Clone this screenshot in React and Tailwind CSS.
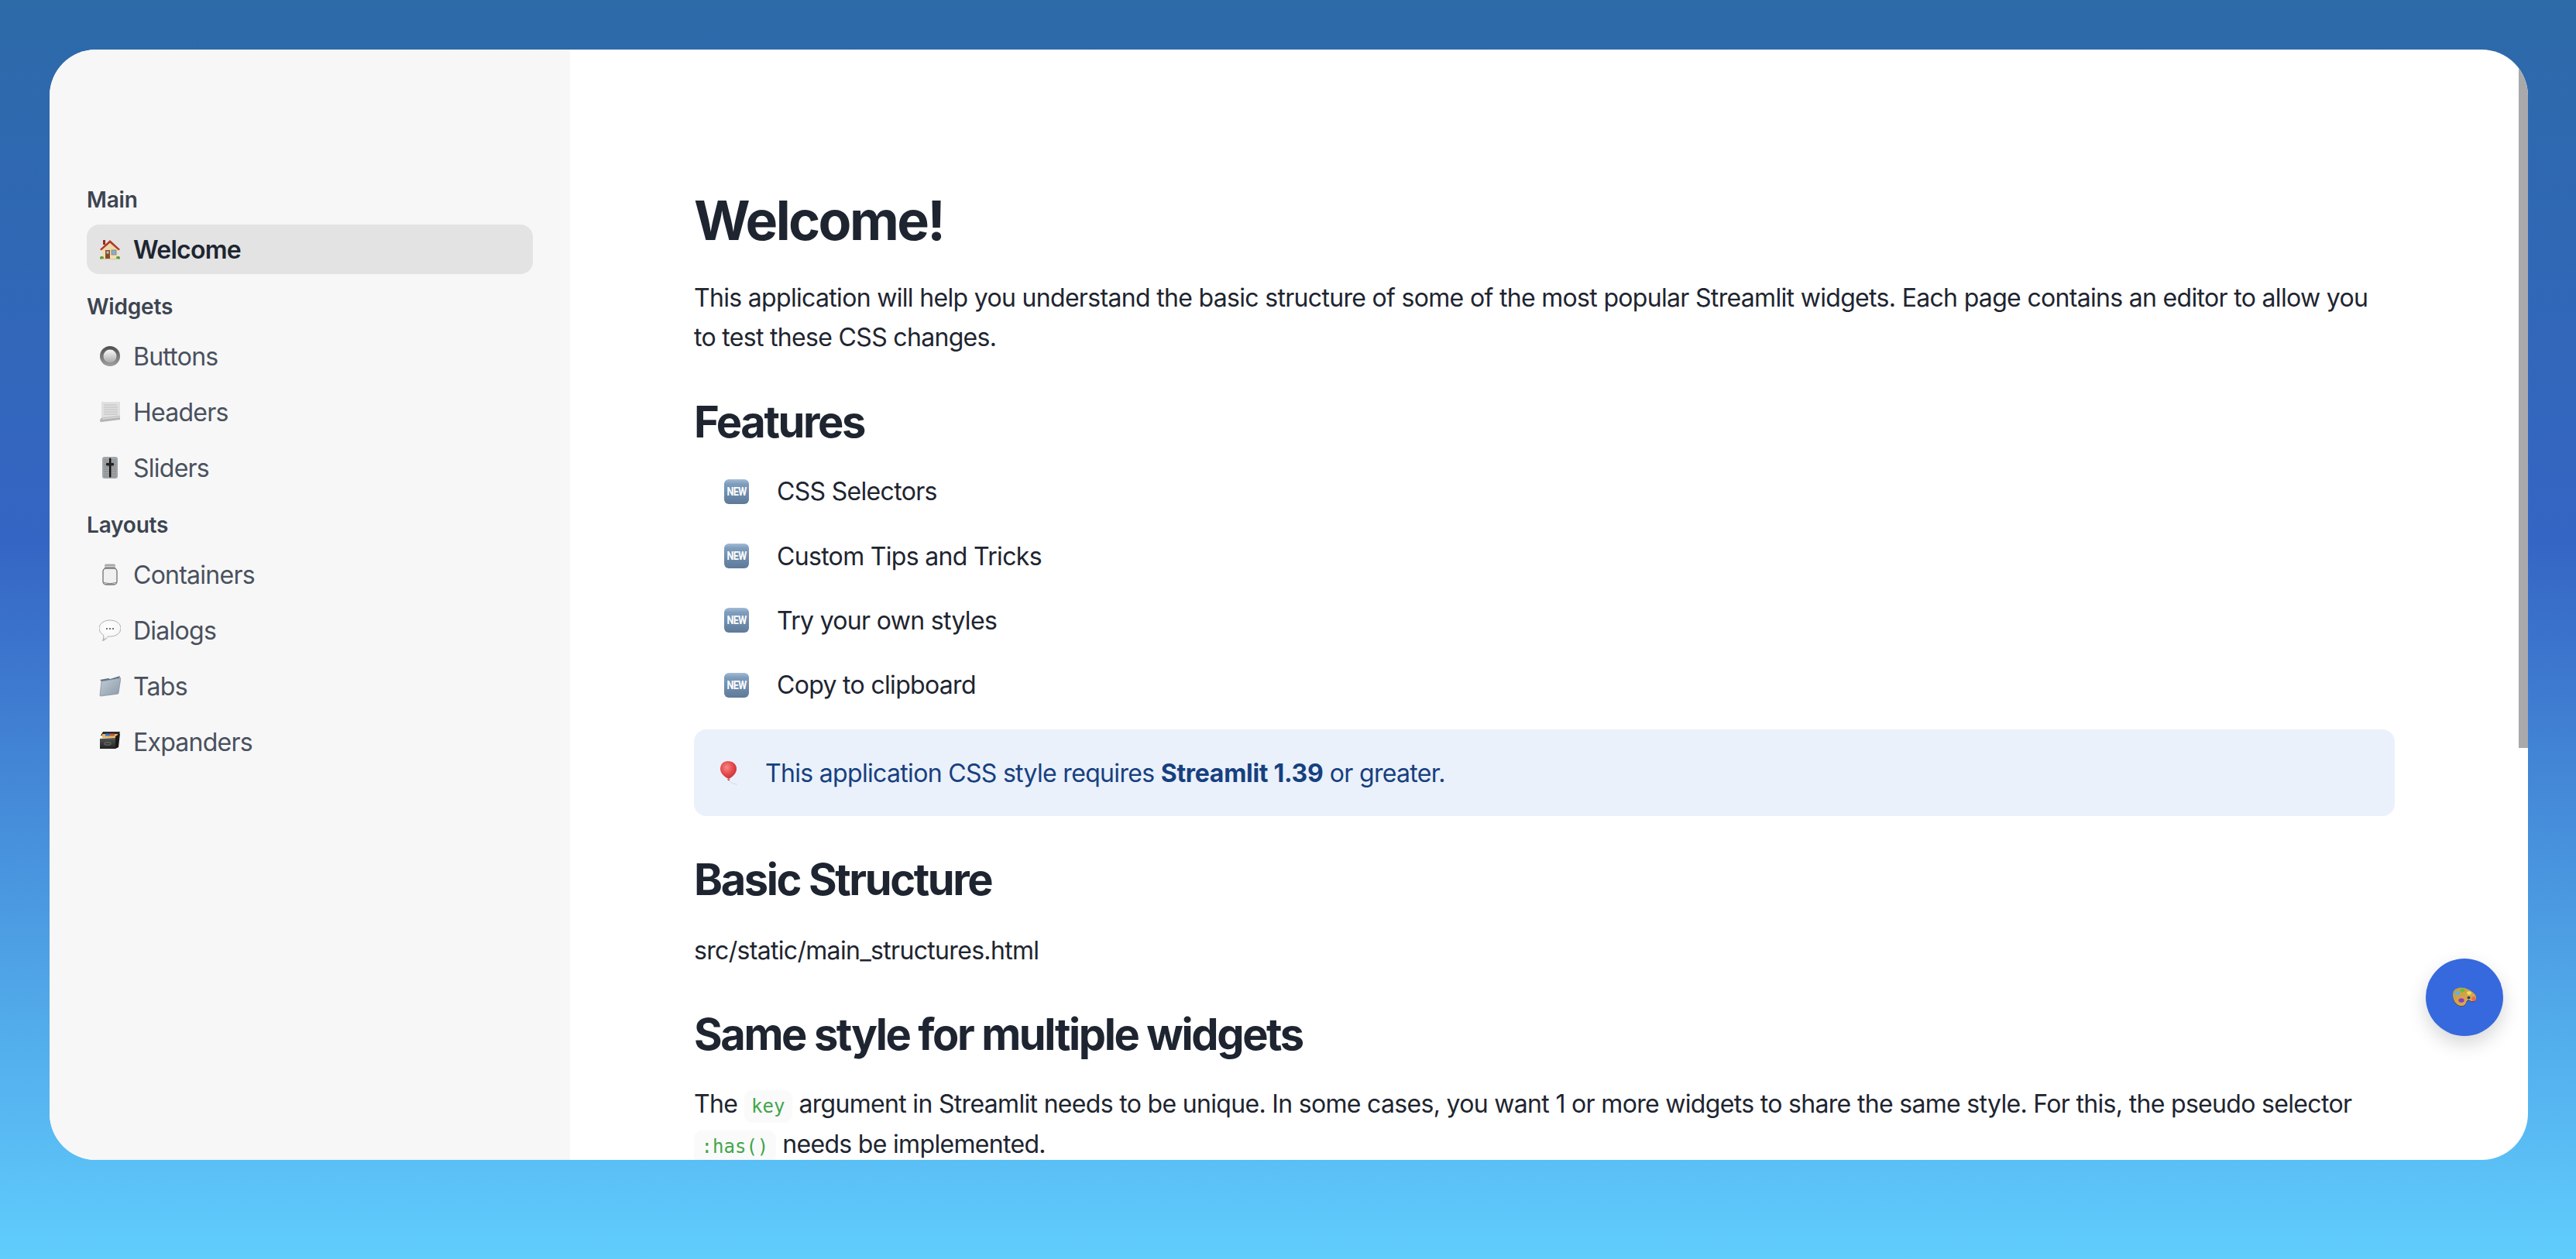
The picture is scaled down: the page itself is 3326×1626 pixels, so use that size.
import React from "react";

const Defs = () => (
  <svg width="0" height="0" className="absolute">
    <defs>
      <linearGradient id="newG" x1="0" y1="0" x2="0" y2="1">
        <stop offset="0" stopColor="#a3bcd6" />
        <stop offset="0.18" stopColor="#7f9dbd" />
        <stop offset="1" stopColor="#5d7a99" />
      </linearGradient>
      <radialGradient id="balG" cx="0.4" cy="0.35" r="0.7">
        <stop offset="0" stopColor="#f58a8a" />
        <stop offset="0.5" stopColor="#e84f4f" />
        <stop offset="1" stopColor="#c62b33" />
      </radialGradient>
      <linearGradient id="radG" x1="0" y1="0" x2="0" y2="1">
        <stop offset="0" stopColor="#4d4d4d" />
        <stop offset="1" stopColor="#a0a0a0" />
      </linearGradient>
      <linearGradient id="radI" x1="0" y1="0" x2="0" y2="1">
        <stop offset="0" stopColor="#fafafa" />
        <stop offset="1" stopColor="#a8a8a8" />
      </linearGradient>
      <linearGradient id="folG" x1="0" y1="0" x2="1" y2="1">
        <stop offset="0" stopColor="#c2ccd6" />
        <stop offset="1" stopColor="#8b9aa8" />
      </linearGradient>
      <linearGradient id="boxG" x1="0" y1="0" x2="0" y2="1">
        <stop offset="0" stopColor="#555" />
        <stop offset="1" stopColor="#222" />
      </linearGradient>
      <radialGradient id="bubG" cx="0.45" cy="0.35" r="0.7">
        <stop offset="0" stopColor="#ffffff" />
        <stop offset="0.72" stopColor="#f6f6f6" />
        <stop offset="1" stopColor="#a9a9a9" />
      </radialGradient>
      <linearGradient id="palG" x1="0" y1="0" x2="1" y2="1">
        <stop offset="0" stopColor="#c99a3c" />
        <stop offset="1" stopColor="#dfae55" />
      </linearGradient>
    </defs>
  </svg>
);

const House = () => (
  <svg viewBox="0 0 28 28" className="w-7 h-7">
    <rect x="4" y="12" width="20" height="14" fill="#f0dfb4" />
    <rect x="5" y="2" width="3" height="6" fill="#8f2f22" />
    <path d="M14 2 L27 14 L25 15.5 L14 6 L3 15.5 L1 14 Z" fill="#b23a2a" />
    <path d="M14 6 L25 15.5 L25 16 L3 16 L3 15.5 Z" fill="#ecd9a9" />
    <rect x="8" y="15" width="6" height="11" fill="#8a4a2c" />
    <rect x="9.5" y="16.5" width="3" height="3" fill="#9ec9e8" />
    <rect x="16" y="15" width="6" height="6" fill="#7fb1d9" stroke="#9c7a55" strokeWidth="0.8" />
    <rect x="1" y="23" width="5" height="4" rx="2" fill="#5f9a3a" />
    <rect x="22" y="23" width="5" height="4" rx="2" fill="#5f9a3a" />
    <rect x="3" y="26" width="22" height="1.2" fill="#d8c9a5" />
  </svg>
);

const RadioBtn = () => (
  <svg viewBox="0 0 28 28" className="w-7 h-7">
    <circle cx="14" cy="14" r="13" fill="url(#radG)" />
    <circle cx="14" cy="14" r="8.5" fill="url(#radI)" />
  </svg>
);

const Page = () => (
  <svg viewBox="0 0 28 28" className="w-7 h-7">
    <rect x="3" y="1" width="24" height="22" fill="#e0e0e0" />
    <g stroke="#bfbfbf" strokeWidth="1">
      <path d="M6 5h17M6 8h18M6 11h18M6 14h18M6 17h18" />
    </g>
    <path d="M1 26 Q1 22 4 21.5 L27 19 L27 24 L3 27 Q1 27 1 26 Z" fill="#b5b5b5" />
    <path d="M4 23 L27 20.5" stroke="#e6e6e6" strokeWidth="1.2" />
  </svg>
);

const Slider = () => (
  <svg viewBox="0 0 28 28" className="w-7 h-7">
    <rect x="4" y="0" width="20" height="28" rx="3" fill="#a2a6a8" />
    <g stroke="#7f8488" strokeWidth="0.9">
      <path d="M6 4h16M6 7h16M6 10h16M6 13h16M6 16h16M6 19h16M6 22h16M6 25h16" />
    </g>
    <rect x="13" y="1.5" width="2.4" height="25" rx="1" fill="#111" />
    <rect x="9" y="8" width="10" height="3.4" rx="0.8" fill="#222" />
  </svg>
);

const Jar = () => (
  <svg viewBox="0 0 28 28" className="w-7 h-7">
    <rect x="7" y="0.5" width="14" height="6" rx="2" fill="#a8a8a8" />
    <path d="M7 3.5h14" stroke="#d0d0d0" strokeWidth="1" />
    <rect x="5" y="6" width="18" height="21" rx="4" fill="#f0f0f0" stroke="#6f7275" strokeWidth="1.3" />
    <path d="M6 24.5 Q14 27 22 24.5" stroke="#7d7d7d" strokeWidth="1" fill="none" />
  </svg>
);

const Bubble = () => (
  <svg viewBox="0 0 28 28" className="w-7 h-7">
    <path d="M14 1 C22 1 28 5.5 28 11.5 C28 17.5 22 22 14 22 C13 22 12.3 22 11.5 21.9 C10 24.5 7.5 26.5 4.5 27.5 C5.5 25.5 6 23 5.6 20.2 C2.2 18.2 0 15 0 11.5 C0 5.5 6 1 14 1 Z" fill="url(#bubG)" stroke="#a0a0a0" strokeWidth="0.8" />
    <circle cx="10" cy="12" r="1" fill="#444" />
    <circle cx="14" cy="12" r="1" fill="#444" />
    <circle cx="18" cy="12" r="1" fill="#444" />
  </svg>
);

const Folder = () => (
  <svg viewBox="0 0 28 28" className="w-7 h-7">
    <path d="M1 6 L12 4 L14 5 L27 1 L26 4 L3 8 Z" fill="#5e7184" />
    <path d="M3 8 L28 3.5 L25 23 Q25 24 23.5 24.3 L2 27 Q1 27 1 25.5 Z" fill="url(#folG)" stroke="#6e7f8f" strokeWidth="0.6" />
  </svg>
);

const FileBox = () => (
  <svg viewBox="0 0 28 28" className="w-7 h-7">
    <path d="M2 6 L5 1 L27 1 L25 6 Z" fill="#2b2b2b" />
    <rect x="4" y="4" width="20" height="5" fill="#e9b864" />
    <rect x="8" y="3.5" width="6" height="3" fill="#3f74c8" />
    <rect x="14" y="3.5" width="6" height="3" fill="#c9553f" />
    <path d="M1 10 L21 9 L21 23 L1 23 Z" fill="url(#boxG)" />
    <path d="M21 7 L27 3 L25 21 L21 23 Z" fill="#1a1a1a" />
    <rect x="7" y="15" width="8" height="3" rx="1" fill="none" stroke="#888" strokeWidth="0.8" />
  </svg>
);

const NewBadge = () => (
  <svg viewBox="0 0 32 32" className="w-8 h-8 block">
    <rect x="0" y="0" width="32" height="32" rx="6" fill="url(#newG)" />
    <text x="16" y="21" textAnchor="middle" fontFamily="Roboto, sans-serif" fontWeight="700" fontSize="14" fill="#fff" textLength="25" lengthAdjust="spacingAndGlyphs">NEW</text>
  </svg>
);

const Balloon = () => (
  <svg viewBox="0 0 28 32" className="w-[28px] h-[32px] block">
    <path d="M12 1 C18 1 23 5 23 11 C23 17 17 22 13 24 C8 22 2 17 2 11 C2 5 6 1 12 1 Z" fill="url(#balG)" />
    <path d="M11 24.5 L14.5 24.5 L13.5 26 L12 26 Z" fill="#c0272f" />
    <path d="M13 26 Q16 30 24 31" stroke="#d4d4d4" strokeWidth="0.8" fill="none" />
  </svg>
);

const Palette = () => (
  <svg viewBox="0 0 32 26" className="w-8 h-[26px] block">
    <path d="M2 5 C5 0 14 -1 21 3 C27 6 32 10 31 15 C30 19 25 19 23 17 C21 15 19 17 18 20 C16 26 9 25 5 21 C1 17 0 9 2 5 Z" fill="#3a2a10" transform="translate(0 0.6)" />
    <path d="M2 5 C5 0 14 -1 21 3 C27 6 32 10 31 15 C30 19 25 19 23 17 C21 15 19 17 18 20 C16 26 9 25 5 21 C1 17 0 9 2 5 Z" fill="url(#palG)" />
    <ellipse cx="7" cy="7.5" rx="3.2" ry="2.6" fill="#58b4ee" />
    <ellipse cx="13.5" cy="4" rx="3" ry="2.2" fill="#59c447" />
    <ellipse cx="22" cy="7.5" rx="2.8" ry="2.2" fill="#f0df55" />
    <ellipse cx="28" cy="15" rx="2.6" ry="3" fill="#ef6a50" />
    <ellipse cx="12" cy="17" rx="3.6" ry="2.8" fill="#8a3cc6" />
    <ellipse cx="21.5" cy="13.5" rx="2" ry="1.7" fill="#1d3f80" />
  </svg>
);

const Label = ({ children }) => (
  <div className="pt-4 pb-2 leading-[50px] text-[28px] font-semibold tracking-[-0.2px] text-[#3d4451]">
    <span className="relative top-px">{children}</span>
  </div>
);

const Item = ({ icon, children, active }) => (
  <div className={"h-16 rounded-2xl flex items-center pl-4 gap-4 text-[32px] tracking-[-0.75px] " + (active ? "bg-[#e3e3e3] font-semibold text-[#1e2530]" : "text-[#4a515e]")}>
    <span className="w-7 h-7 shrink-0 flex items-center justify-center">{icon}</span>
    <span className="pt-[2px]">{children}</span>
  </div>
);

const Li = ({ children }) => (
  <li className="flex items-center h-[51.2px] mb-8 pl-[39px] gap-9">
    <NewBadge />
    <span>{children}</span>
  </li>
);

const H2 = ({ children, className }) => (
  <h2 className={"text-[56px] font-bold leading-[72px] tracking-[-2.4px] text-[#1e2530] " + className}>{children}</h2>
);

const Code = ({ children }) => (
  <code className="bg-[#fafafa] text-[#3fa64a] text-[24px] leading-none tracking-normal rounded-[10px] px-[9.6px] py-[7px] font-['DejaVu_Sans_Mono',monospace]">{children}</code>
);

export default function App() {
  return (
    <div className="w-[3326px] h-[1626px] overflow-hidden bg-[linear-gradient(180deg,#2c6aa8_0%,#3565c4_43%,#60cdfd_100%)] pt-16 pl-16 font-['Inter',sans-serif]">
      <Defs />
      <div className="relative w-[3200px] h-[1434px] rounded-[60px] overflow-hidden bg-white flex">
        <aside className="w-[672px] shrink-0 bg-[#f7f7f7] pt-[152px] px-12">
          <Label>Main</Label>
          <Item icon={<House />} active>Welcome</Item>
          <Label>Widgets</Label>
          <div className="flex flex-col gap-2">
            <Item icon={<RadioBtn />}>Buttons</Item>
            <Item icon={<Page />}>Headers</Item>
            <Item icon={<Slider />}>Sliders</Item>
          </div>
          <Label>Layouts</Label>
          <div className="flex flex-col gap-2">
            <Item icon={<Jar />}>Containers</Item>
            <Item icon={<Bubble />}>Dialogs</Item>
            <Item icon={<Folder />}>Tabs</Item>
            <Item icon={<FileBox />}>Expanders</Item>
          </div>
        </aside>
        <main className="flex-1 flex min-w-0">
          <div className="flex-1 min-w-0 px-40 pt-[172px] text-[32px] leading-[51.2px] tracking-[-0.68px] text-[#1e2530]">
            <h1 className="text-[70px] font-bold leading-[98px] tracking-[-2.6px]">Welcome!</h1>
            <p className="mt-[25px]">This application will help you understand the basic structure of some of the most popular Streamlit widgets. Each page contains an editor to allow you<br />to test these CSS changes.</p>
            <H2 className="mt-[48px] mb-[28px]">Features</H2>
            <ul>
              <Li>CSS Selectors</Li>
              <Li>Custom Tips and Tricks</Li>
              <Li>Try your own styles</Li>
              <Li>Copy to clipboard</Li>
            </ul>
            <div className="h-28 rounded-2xl bg-[#eaf1fb] flex items-center pl-8 gap-[32px] text-[#17407f]">
              <Balloon />
              <span>This application CSS style requires <b className="font-bold tracking-[-0.3px]">Streamlit 1.39</b> or greater.</span>
            </div>
            <H2 className="mt-[46px] mb-[30px]">Basic Structure</H2>
            <p>src/static/main_structures.html</p>
            <H2 className="mt-[47px] mb-[28px]">Same style for multiple widgets</H2>
            <p>The <Code>key</Code> argument in Streamlit needs to be unique. In some cases, you want 1 or more widgets to share the same style. For this, the pseudo selector<br /><Code>:has()</Code> needs be implemented.</p>
          </div>
          <div className="w-3 shrink-0">
            <div className="h-[902px] w-3 bg-[#a9a9ac]" />
          </div>
        </main>
        <button className="absolute left-[3068px] top-[1174px] w-[100px] h-[100px] rounded-full bg-[#3669dd] shadow-[0_10px_24px_rgba(0,0,0,0.16)] flex items-center justify-center">
          <Palette />
        </button>
      </div>
    </div>
  );
}
